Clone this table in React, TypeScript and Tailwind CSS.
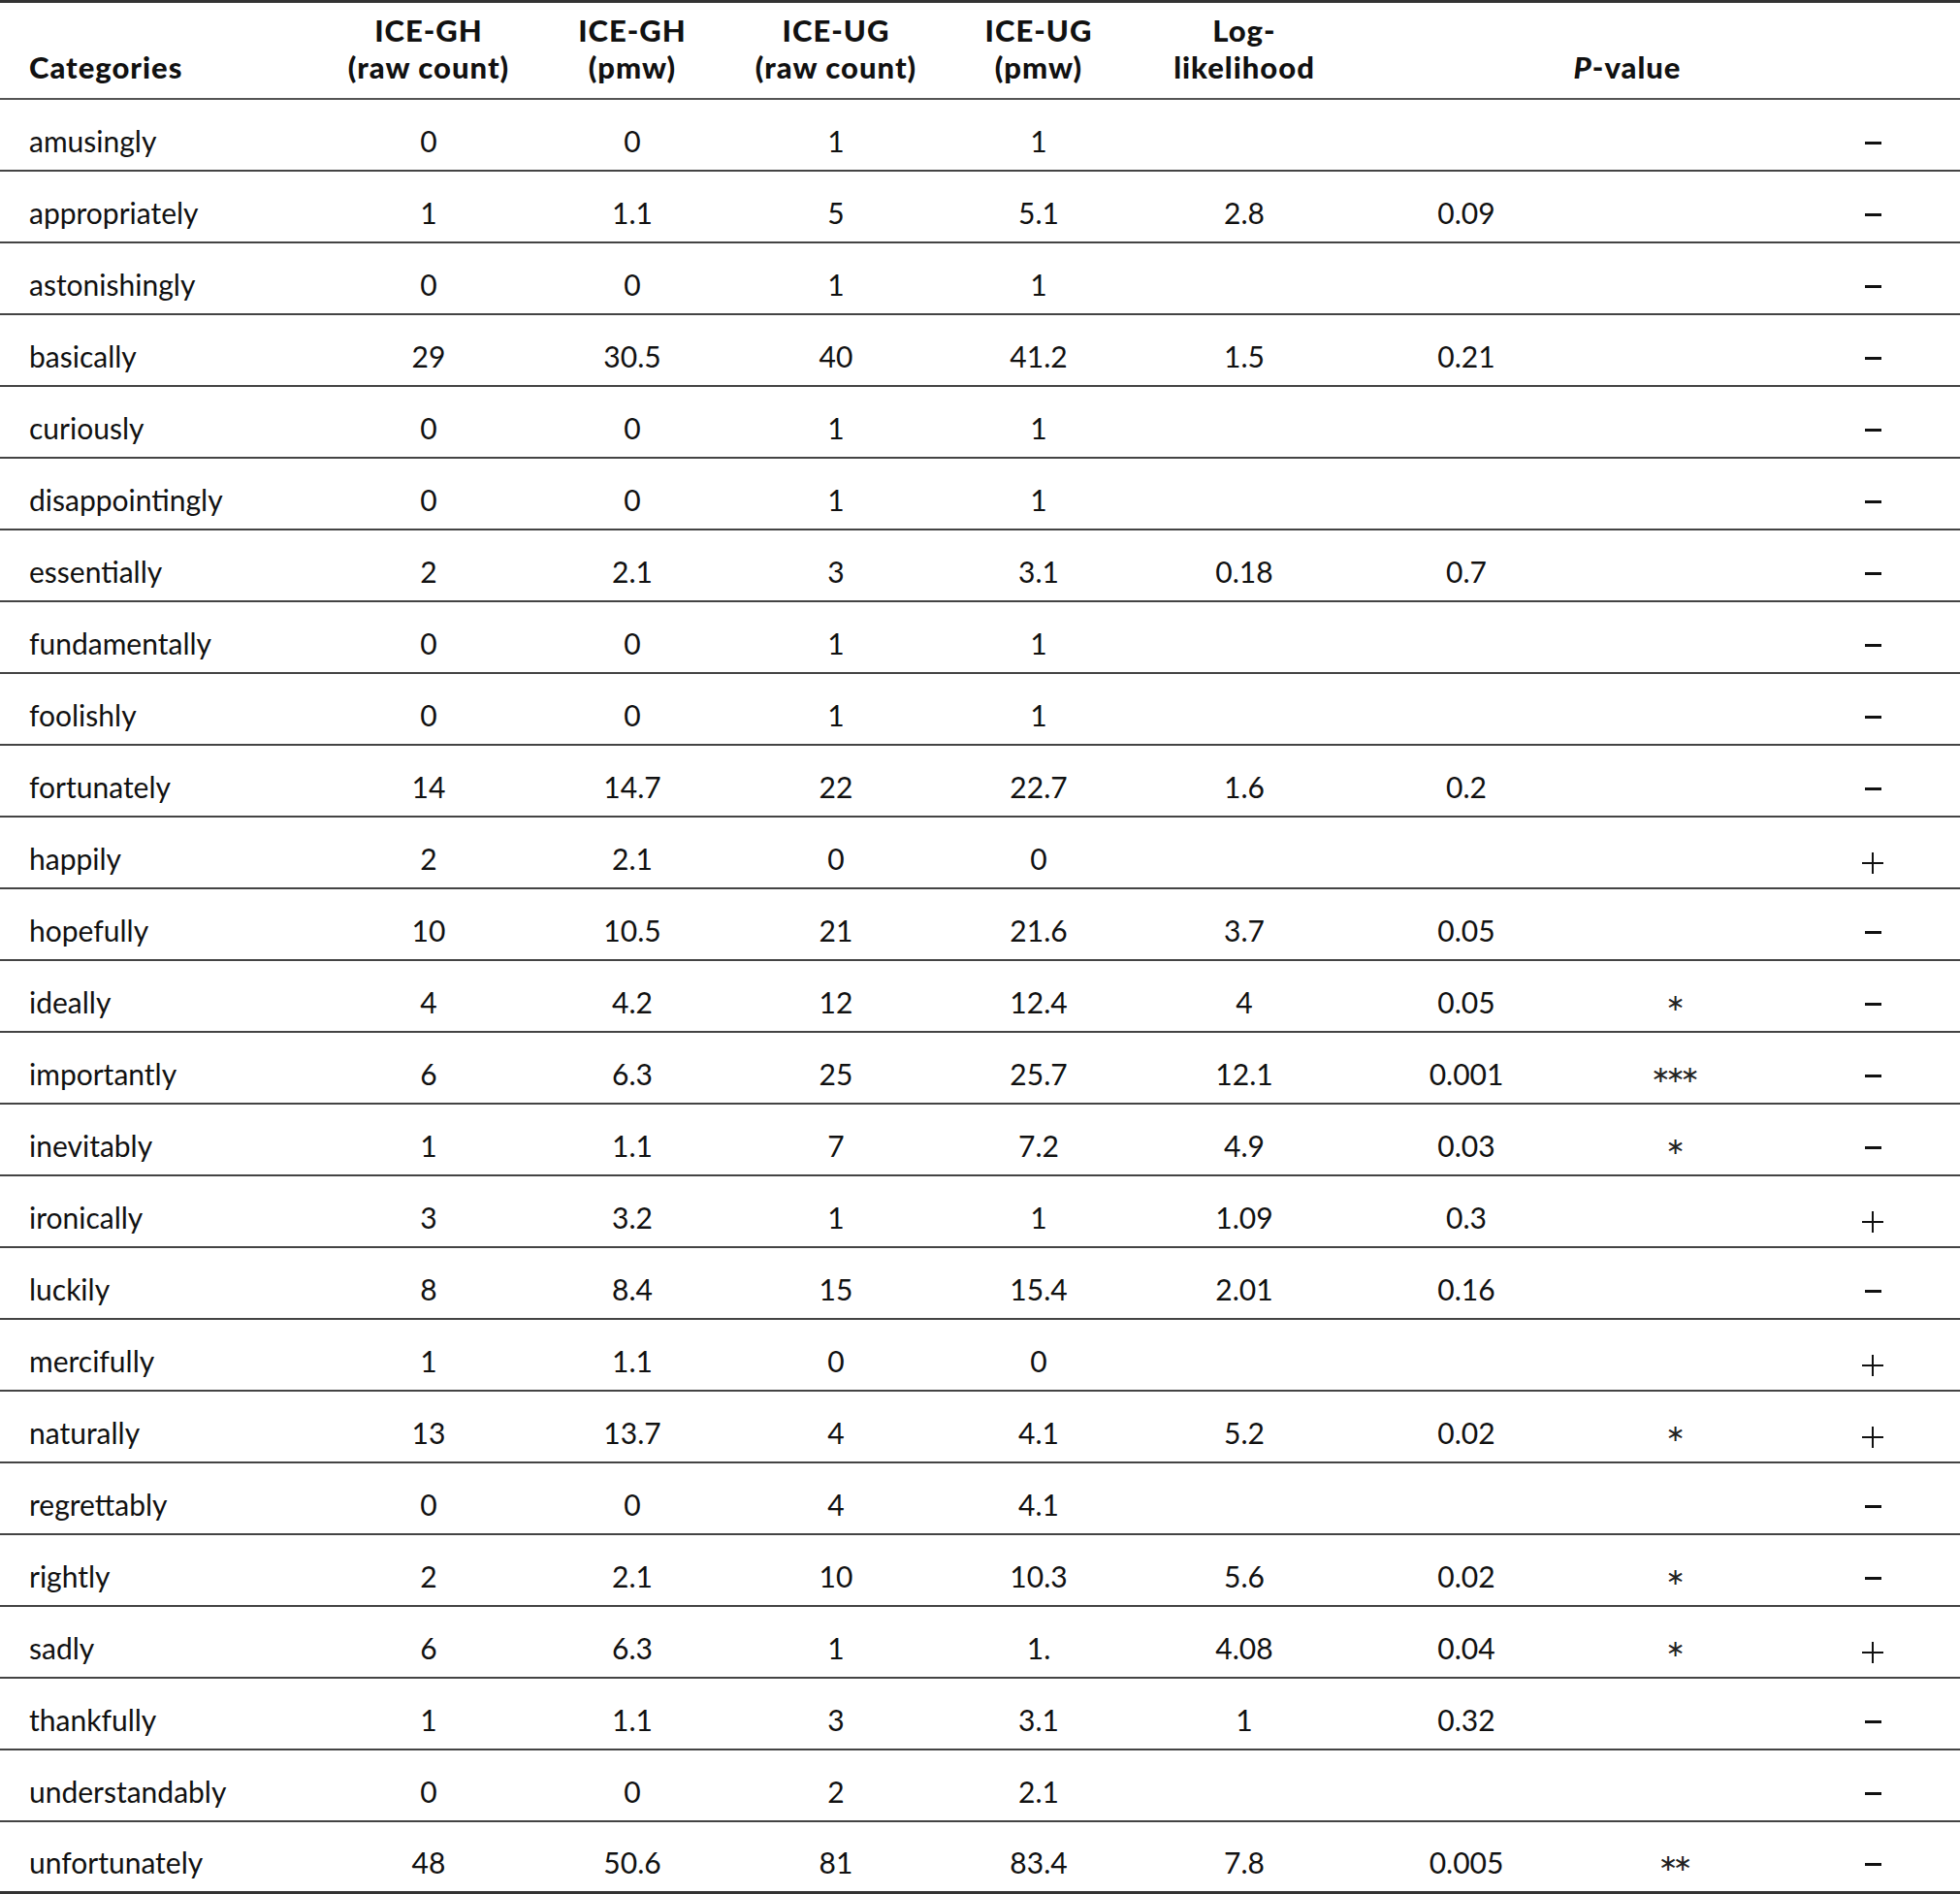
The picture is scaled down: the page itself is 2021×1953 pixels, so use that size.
import React from "react";

type Row = [string, string, string, string, string, string, string, string, "-" | "+"];

const rows: Row[] = [
  ["amusingly", "0", "0", "1", "1", "", "", "", "-"],
  ["appropriately", "1", "1.1", "5", "5.1", "2.8", "0.09", "", "-"],
  ["astonishingly", "0", "0", "1", "1", "", "", "", "-"],
  ["basically", "29", "30.5", "40", "41.2", "1.5", "0.21", "", "-"],
  ["curiously", "0", "0", "1", "1", "", "", "", "-"],
  ["disappointingly", "0", "0", "1", "1", "", "", "", "-"],
  ["essentially", "2", "2.1", "3", "3.1", "0.18", "0.7", "", "-"],
  ["fundamentally", "0", "0", "1", "1", "", "", "", "-"],
  ["foolishly", "0", "0", "1", "1", "", "", "", "-"],
  ["fortunately", "14", "14.7", "22", "22.7", "1.6", "0.2", "", "-"],
  ["happily", "2", "2.1", "0", "0", "", "", "", "+"],
  ["hopefully", "10", "10.5", "21", "21.6", "3.7", "0.05", "", "-"],
  ["ideally", "4", "4.2", "12", "12.4", "4", "0.05", "*", "-"],
  ["importantly", "6", "6.3", "25", "25.7", "12.1", "0.001", "***", "-"],
  ["inevitably", "1", "1.1", "7", "7.2", "4.9", "0.03", "*", "-"],
  ["ironically", "3", "3.2", "1", "1", "1.09", "0.3", "", "+"],
  ["luckily", "8", "8.4", "15", "15.4", "2.01", "0.16", "", "-"],
  ["mercifully", "1", "1.1", "0", "0", "", "", "", "+"],
  ["naturally", "13", "13.7", "4", "4.1", "5.2", "0.02", "*", "+"],
  ["regrettably", "0", "0", "4", "4.1", "", "", "", "-"],
  ["rightly", "2", "2.1", "10", "10.3", "5.6", "0.02", "*", "-"],
  ["sadly", "6", "6.3", "1", "1.", "4.08", "0.04", "*", "+"],
  ["thankfully", "1", "1.1", "3", "3.1", "1", "0.32", "", "-"],
  ["understandably", "0", "0", "2", "2.1", "", "", "", "-"],
  ["unfortunately", "48", "50.6", "81", "83.4", "7.8", "0.005", "**", "-"],
];

const grid =
  "grid grid-cols-[337px_210px_210px_210px_208px_216px_242px_184px_1fr]";

function Sign({ s }: { s: "-" | "+" }) {
  if (s === "+") {
    return (
      <span className="relative inline-block w-[22px] h-[22px] mb-[3px]">
        <span className="absolute left-0 top-[10px] w-[22px] h-[2px] bg-[#111]" />
        <span className="absolute left-[10px] top-0 w-[2px] h-[22px] bg-[#111]" />
      </span>
    );
  }
  return <span className="inline-block w-[17px] h-[3px] bg-[#111] mb-[15px]" />;
}

function Stars({ n }: { n: number }) {
  if (!n) return null;
  return (
    <span
      className="inline-block mb-[6px] text-[24px] leading-[24px] tracking-[-5px] pr-[0px] text-[#222]"
      style={{ fontFamily: "'DejaVu Sans', sans-serif" }}
    >
      {"\u2217".repeat(n)}
    </span>
  );
}

export default function App() {
  return (
    <div
      className="w-[2021px] bg-white text-[#111]"
      style={{ fontFamily: "Lato, 'Open Sans', sans-serif" }}
    >
      <div
        className={`${grid} h-[103px] items-end border-t-[3px] border-b-2 border-t-[#333] border-b-[#555] pb-[13px] font-black text-[31px] tracking-[1px] leading-[38px]`}
      >
        <div className="pl-[30px]">Categories</div>
        <div className="text-center">
          ICE-GH
          <br />
          (raw count)
        </div>
        <div className="text-center">
          ICE-GH
          <br />
          (pmw)
        </div>
        <div className="text-center">
          ICE-UG
          <br />
          (raw count)
        </div>
        <div className="text-center">
          ICE-UG
          <br />
          (pmw)
        </div>
        <div className="text-center">
          Log-
          <br />
          likelihood
        </div>
        <div className="col-span-3 text-center pr-[56px]">
          <span className="italic">P</span>-value
        </div>
      </div>
      {rows.map((r, i) => (
        <div
          key={i}
          className={`${grid} h-[74px] items-end pb-[11px] text-[30px] leading-[38px] ${
            i === rows.length - 1
              ? "border-b-[3px] border-b-[#333]"
              : "border-b-2 border-b-[#444]"
          }`}
        >
          <div className="pl-[30px]">{r[0]}</div>
          <div className="text-center">{r[1]}</div>
          <div className="text-center">{r[2]}</div>
          <div className="text-center">{r[3]}</div>
          <div className="text-center">{r[4]}</div>
          <div className="text-center">{r[5]}</div>
          <div className="text-center">{r[6]}</div>
          <div className="flex justify-center items-end h-full">
            <Stars n={r[7].length} />
          </div>
          <div className="flex justify-center items-end h-full pl-[24px]">
            <Sign s={r[8]} />
          </div>
        </div>
      ))}
    </div>
  );
}
